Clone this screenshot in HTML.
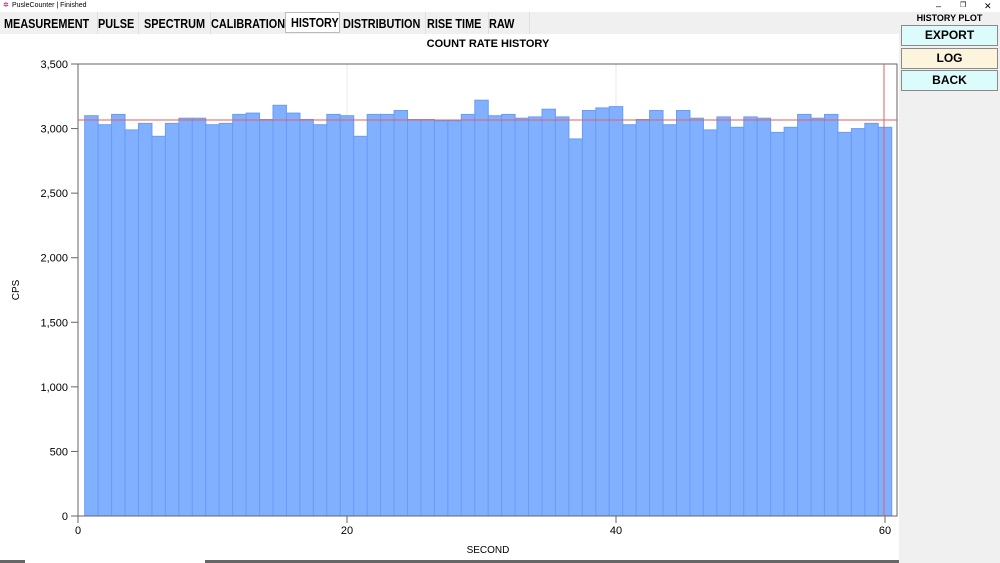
<!DOCTYPE html>
<html><head><meta charset="utf-8"><style>
body{margin:0;width:1000px;height:563px;overflow:hidden;background:#fff;font-family:"Liberation Sans",sans-serif;position:relative}
.title{position:absolute;left:0;top:0;width:1000px;height:12px;background:#fff;font-size:7px;line-height:12px}
.title span{position:absolute;left:12px;top:0;white-space:nowrap}
.tabs{position:absolute;left:0;top:12px;width:899px;height:22px;background:#f0f0f0}
.tab{position:absolute;top:0;height:22px;font-size:12.5px;font-weight:bold;line-height:24px;color:#000;border-right:1px solid #e0e0e0;white-space:nowrap}
.tab span{display:inline-block;transform:scaleX(0.87);transform-origin:left center}
.tab.sel{background:#fff;border:1px solid #bbb;top:0;height:19px;line-height:20px}
.right{position:absolute;left:899px;top:12px;width:101px;height:551px;background:#f0f0f0}
.btn{position:absolute;left:2px;width:95px;height:19px;border:1px solid #8a8a8a;font-weight:bold;font-size:12px;text-align:center;line-height:19px}
.sb{position:absolute;top:560px;height:3px;background:#666}
</style></head><body>
<div class="title"><span>PuslеCounter | Finished</span><span style="left:3px;color:#a06">✲</span><span style="left:936px;font-size:9px">–</span><span style="left:960px">❐</span><span style="left:984px;font-size:9px">✕</span></div>
<div class="tabs">
<div class="tab" style="left:0;width:93px;padding-left:4px"><span>MEASUREMENT</span></div>
<div class="tab" style="left:97px;width:40px;padding-left:1px"><span>PULSE</span></div>
<div class="tab" style="left:138px;width:66px;padding-left:6px"><span>SPECTRUM</span></div>
<div class="tab" style="left:205px;width:78px;padding-left:6px"><span>CALIBRATION</span></div>
<div class="tab sel" style="left:285px;width:48px;padding-left:5px"><span>HISTORY</span></div>
<div class="tab" style="left:340px;width:82px;padding-left:3px"><span>DISTRIBUTION</span></div>
<div class="tab" style="left:423px;width:61px;padding-left:4px"><span>RISE TIME</span></div>
<div class="tab" style="left:485px;width:40px;padding-left:4px"><span>RAW</span></div>
</div>
<div class="right">
<div style="position:absolute;left:0;width:101px;top:1px;text-align:center;font-size:9px;font-weight:bold">HISTORY PLOT</div>
<div class="btn" style="top:13px;background:#dcfbfb">EXPORT</div>
<div class="btn" style="top:36px;background:#fcf4dc">LOG</div>
<div class="btn" style="top:58px;background:#dcfbfb">BACK</div>
</div>
<svg id="s" width="899" height="563" style="position:absolute;left:0;top:0" font-family="Liberation Sans, sans-serif">
<text x="488" y="47" font-size="11" font-weight="bold" text-anchor="middle">COUNT RATE HISTORY</text>
<line x1="347" y1="64" x2="347" y2="516" stroke="#e8e8e8"/>
<line x1="616" y1="64" x2="616" y2="516" stroke="#e8e8e8"/>
<g id="bars"></g>
<rect x="78" y="64" width="819" height="452" fill="none" stroke="#666" stroke-width="1"/>
<line x1="78" y1="120" x2="897" y2="120" stroke="#e06060"/>
<line x1="884" y1="64" x2="884" y2="516" stroke="#e06060"/>
<g id="ax" font-size="11"></g>
<text x="488" y="553" font-size="10" text-anchor="middle">SECOND</text>
<text transform="translate(19,290) rotate(-90)" font-size="10" text-anchor="middle">CPS</text>
</svg>
<div class="sb" style="left:0;width:25px"></div><div class="sb" style="left:205px;width:694px"></div>
<script>
var v=[3100,3030,3110,2990,3040,2940,3040,3080,3080,3030,3040,3110,3120,3070,3180,3120,3070,3030,3110,3100,2940,3110,3110,3140,3070,3070,3060,3060,3110,3220,3100,3110,3080,3090,3150,3090,2920,3140,3160,3170,3030,3070,3140,3030,3140,3080,2990,3090,3010,3090,3080,2970,3010,3110,3080,3110,2970,3000,3040,3010];
var h='',k=13.45,sy=452/3500;
for(var i=0;i<60;i++){var x=78+(i+0.5)*k,y=516-v[i]*sy;h+='<rect x="'+x.toFixed(1)+'" y="'+y.toFixed(1)+'" width="'+k.toFixed(2)+'" height="'+(516-y).toFixed(1)+'" fill="#80b0ff" stroke="#6a9cf5" stroke-width="1"/>';}
document.getElementById('bars').innerHTML=h;
var a='';
for(var j=0;j<=7;j++){var val=j*500,y=516-val*sy;a+='<line x1="71" x2="78" y1="'+y+'" y2="'+y+'" stroke="#666"/><text x="68" y="'+(y+4)+'" text-anchor="end">'+val.toLocaleString('en-US')+'</text>';}
[0,20,40,60].forEach(function(t){var x=78+t*k;a+='<line x1="'+x+'" x2="'+x+'" y1="516" y2="523" stroke="#666"/><text x="'+x+'" y="534" text-anchor="middle">'+t+'</text>';});
document.getElementById('ax').innerHTML=a;
</script>
</body></html>
